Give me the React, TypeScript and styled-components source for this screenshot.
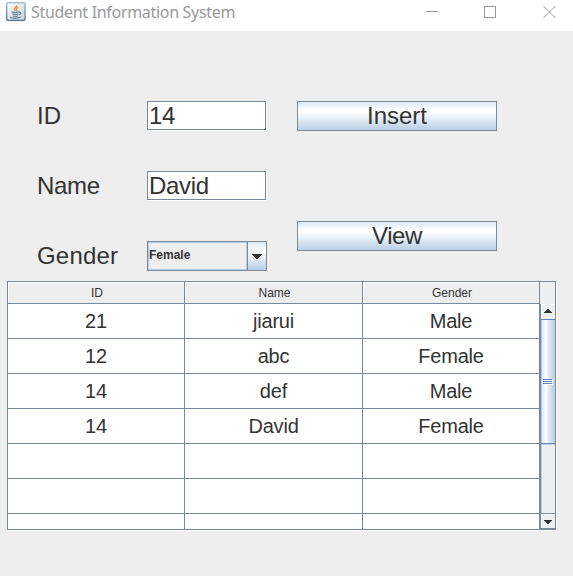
import React from 'react';
import styled, { createGlobalStyle } from 'styled-components';

const GlobalStyle = createGlobalStyle`
  * { box-sizing: border-box; }
  body {
    margin: 0;
    background: #eeeeee;
    font-family: "Liberation Sans", Arial, sans-serif;
    color: #333333;
  }
`;

const LINE = '#7a8a99';
const STEEL = 'linear-gradient(180deg, #dde8f3 0%, #ffffff 30%, #ffffff 36%, #b8cfe5 100%)';

const Frame = styled.div`
  width: 573px;
  height: 576px;
  background: #eeeeee;
  overflow: hidden;
`;

const TitleBar = styled.header`
  display: flex;
  align-items: flex-start;
  height: 31px;
  padding: 0 17px 0 6px;
  background: #ffffff;
`;

const JavaIcon = styled.svg`
  width: 20px;
  height: 20px;
  margin-top: 2px;
`;

const Title = styled.h1`
  flex: 1;
  margin: 0 0 0 5px;
  font: 400 16px/25px "Noto Sans", sans-serif;
  letter-spacing: -0.31px;
  color: #999999;
  white-space: nowrap;
`;

const WindowControls = styled.div`
  display: flex;
  gap: 46px;
  padding-top: 5px;
`;

const ControlIcon = styled.svg`
  display: block;
  width: 13px;
  height: 14px;
  fill: none;
  stroke: #999999;
`;

const Form = styled.main`
  display: grid;
  grid-template-columns: 110px 120px 200px;
  grid-template-rows: 30px 30px 30px;
  row-gap: 40px;
  padding: 70px 0 10px 37px;
`;

const Label = styled.label<{ $spacing?: number }>`
  font-size: 24px;
  line-height: 30px;
  letter-spacing: ${p => p.$spacing ?? 0}px;
`;

const TextInput = styled.input`
  width: 119px;
  height: 29px;
  padding: 1px 1px 0;
  border: 1px solid ${LINE};
  border-radius: 0;
  outline: none;
  background: #ffffff;
  box-shadow: 1px 1px 0 #ffffff;
  font: 24px "Liberation Sans", Arial, sans-serif;
  letter-spacing: -0.3px;
  color: #333333;
`;

const Actions = styled.div`
  display: flex;
  flex-direction: column;
  gap: 90px;
  grid-column: 3;
  grid-row: 1 / span 3;
  margin-left: 30px;
`;

const Button = styled.button<{ $spacing?: number }>`
  width: 200px;
  height: 30px;
  padding: 0;
  border: 1px solid ${LINE};
  background: ${STEEL};
  font: 24px/28px "Liberation Sans", Arial, sans-serif;
  letter-spacing: ${p => p.$spacing ?? 0}px;
  color: #333333;
`;

const Combo = styled.div`
  display: flex;
  height: 30px;
  border: 1px solid ${LINE};
`;

const ComboValue = styled.span`
  width: 99px;
  border: 1px solid #b8cfe5;
  font: bold 12px/24px "Liberation Sans", Arial, sans-serif;
`;

const ComboArrow = styled.span`
  display: flex;
  flex: 1;
  align-items: center;
  justify-content: center;
  padding-top: 1px;
  border-left: 1px solid ${LINE};
  background: ${STEEL};
`;

const Arrow = styled.svg`
  display: block;
  fill: #333333;
  shape-rendering: crispEdges;
`;

const ScrollPane = styled.section`
  display: flex;
  width: 549px;
  height: 249px;
  margin-left: 7px;
  border: 1px solid ${LINE};
  box-shadow: 1px 1px 0 #ffffff;
  overflow: hidden;
`;

const Table = styled.div`
  width: 532px;
  flex: none;
`;

const Row = styled.div`
  display: grid;
  grid-template-columns: 177px 178px 177px;
  height: 35px;
`;

const HeaderRow = styled(Row)`
  height: 22px;
`;

const HeaderCell = styled.div`
  height: 22px;
  border: solid ${LINE};
  border-width: 0 1px 1px 0;
  box-shadow: inset 1px 1px 0 #ffffff;
  background: #eeeeee;
  font-size: 12px;
  line-height: 22px;
  text-align: center;
  padding-left: 2px;
`;

const Cell = styled.div`
  border: solid ${LINE};
  border-width: 0 1px 1px 0;
  background: #ffffff;
  font-size: 20px;
  line-height: 34px;
  letter-spacing: -0.18px;
  text-align: center;
`;

const ScrollColumn = styled.div`
  display: flex;
  flex-direction: column;
  width: 15px;
`;

const Corner = styled.div`
  height: 22px;
  background: #eeeeee;
`;

const ScrollBar = styled.div`
  display: flex;
  flex: 1;
  flex-direction: column;
`;

const ArrowButton = styled.div<{ $down?: boolean }>`
  display: flex;
  align-items: center;
  justify-content: center;
  height: ${p => (p.$down ? 16 : 15)}px;
  border-left: 1px solid ${LINE};
  border-top: ${p => (p.$down ? `1px solid ${LINE}` : '0')};
  border-bottom: ${p => (p.$down ? `1px solid ${LINE}` : '0')};
  box-shadow: inset 1px 1px 0 #ffffff;
  padding: ${p => (p.$down ? '2px 0 0' : '0 0 1px')};
`;

const Thumb = styled.div`
  display: flex;
  align-items: center;
  justify-content: center;
  height: 125px;
  border: solid #6382bf;
  border-width: 1px 0 1px 1px;
  background: linear-gradient(90deg, #b8cfe5 0 1px, #dde8f3 1px, #ffffff 5px, #dde8f3 8px, #b8cfe5 100%);
`;

const Track = styled.div`
  flex: 1;
  border-left: 1px solid ${LINE};
  box-shadow: inset 1px 1px 0 #b8cfe5;
`;

const rows = [
  ['21', 'jiarui', 'Male'],
  ['12', 'abc', 'Female'],
  ['14', 'def', 'Male'],
  ['14', 'David', 'Female'],
  ['', '', ''],
  ['', '', ''],
  ['', '', ''],
];

export default function App() {
  return (
    <>
      <GlobalStyle />
      <Frame>
        <TitleBar>
          <JavaIcon viewBox="0 0 20 20">
            <defs>
              <linearGradient id="tile" x1="0" y1="0" x2="1" y2="1">
                <stop offset="0" stopColor="#ffffff" />
                <stop offset="1" stopColor="#c9d2da" />
              </linearGradient>
              <linearGradient id="edge" x1="0" y1="0" x2="0" y2="1">
                <stop offset="0" stopColor="#9fb9cf" />
                <stop offset="1" stopColor="#4f738f" />
              </linearGradient>
            </defs>
            <rect x="0.7" y="0.7" width="18.3" height="17.6" rx="1.3" fill="url(#tile)" stroke="url(#edge)" strokeWidth="1.3" />
            <path d="M10.5 3.2c1 1.8-3.4 2.9-2.2 4.6l1 1.2M12 5.3c-2 .8-2.7 1.7-1.4 2.8.4.5 0 1-.5 1.3" fill="none" stroke="#ed8b3b" strokeWidth="1.3" />
            <path d="M5.4 9.8c2 .9 5.5.9 8 0M6.2 12c2 .7 4.4.7 6.3 0M6.8 13.9c1.6.5 3.7.5 5.3 0M13.3 10.2c2.4-.4 2 2-.3 2.5M4 15.2c2.6 1.3 8.6 1.2 10.8-.3" fill="none" stroke="#557f9f" strokeWidth="1.1" />
          </JavaIcon>
          <Title>Student Information System</Title>
          <WindowControls>
            <ControlIcon viewBox="0 0 13 14"><path d="M1 6.5h12" /></ControlIcon>
            <ControlIcon viewBox="0 0 13 14"><rect x="0.5" y="1.5" width="11" height="11" /></ControlIcon>
            <ControlIcon viewBox="0 0 13 14"><path d="M0.5 1l12 12M12.5 1l-12 12" /></ControlIcon>
          </WindowControls>
        </TitleBar>
        <Form>
          <Label htmlFor="student-id">ID</Label>
          <TextInput id="student-id" defaultValue="14" />
          <Label htmlFor="student-name" $spacing={-0.3}>Name</Label>
          <TextInput id="student-name" defaultValue="David" />
          <Label $spacing={0.2}>Gender</Label>
          <Combo>
            <ComboValue>Female</ComboValue>
            <ComboArrow>
              <Arrow width="10" height="5" viewBox="0 0 10 5"><path d="M0 0h10v1h-1v1h-1v1h-1v1h-1v1h-2v-1h-1v-1h-1v-1h-1v-1h-1z" /></Arrow>
            </ComboArrow>
          </Combo>
          <Actions>
            <Button>Insert</Button>
            <Button $spacing={-0.4}>View</Button>
          </Actions>
        </Form>
        <ScrollPane>
          <Table>
            <HeaderRow>
              {['ID', 'Name', 'Gender'].map(name => <HeaderCell key={name}>{name}</HeaderCell>)}
            </HeaderRow>
            {rows.map((row, i) => (
              <Row key={i}>
                {row.map((value, j) => <Cell key={j}>{value}</Cell>)}
              </Row>
            ))}
          </Table>
          <ScrollColumn>
            <Corner />
            <ScrollBar>
              <ArrowButton>
                <Arrow width="8" height="4" viewBox="0 0 8 4"><path d="M3 0h2v1h1v1h1v1h1v1h-8v-1h1v-1h1v-1h1z" /></Arrow>
              </ArrowButton>
              <Thumb>
                <svg width="10" height="6" viewBox="0 0 10 6" shapeRendering="crispEdges">
                  <path d="M1 1.5h9M1 3.5h9M1 5.5h9" stroke="#ffffff" />
                  <path d="M0 .5h9M0 2.5h9M0 4.5h9" stroke="#6382bf" />
                </svg>
              </Thumb>
              <Track />
              <ArrowButton $down>
                <Arrow width="8" height="4" viewBox="0 0 8 4"><path d="M0 0h8v1h-1v1h-1v1h-1v1h-2v-1h-1v-1h-1v-1h-1z" /></Arrow>
              </ArrowButton>
            </ScrollBar>
          </ScrollColumn>
        </ScrollPane>
      </Frame>
    </>
  );
}
